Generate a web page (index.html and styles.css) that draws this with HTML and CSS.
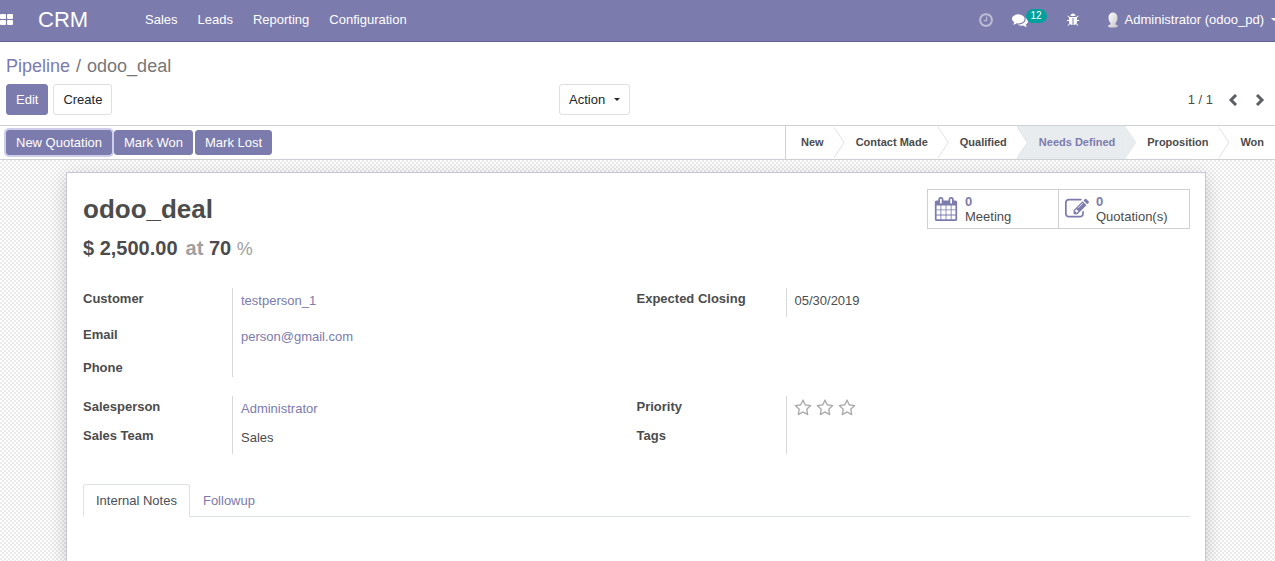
FILE: index.html
```html
<!DOCTYPE html>
<html lang="en">
<head>
<meta charset="utf-8">
<title>odoo_deal - CRM</title>
<link rel="stylesheet" href="styles.css">
</head>
<body>
<svg class="sprite" aria-hidden="true">
  <symbol id="star" viewBox="0 0 1792 1792"><path d="M1201 1004l306-297-422-62-189-382-189 382-422 62 306 297-73 421 378-199 377 199zm527-357q0 22-26 48l-363 354 86 500q1 7 1 20 0 50-41 50-19 0-40-12l-449-236-449 236q-22 12-40 12-21 0-31.5-14.5t-10.5-35.5q0-6 2-20l86-500-364-354q-25-27-25-48 0-37 56-46l502-73 225-455q19-41 49-41t49 41l225 455 502 73q56 9 56 46z"/></symbol>
</svg>
<header class="navbar">
  <button class="nav-icon apps" aria-label="Apps"><svg width="13" height="12" viewBox="0 0 13 12"><rect width="6" height="5" rx="1"/><rect x="7" width="6" height="5" rx="1"/><rect y="6" width="6" height="5" rx="1"/><rect x="7" y="6" width="6" height="5" rx="1"/></svg></button>
  <a class="brand" href="#">CRM</a>
  <nav class="menu">
    <a href="#">Sales</a>
    <a href="#">Leads</a>
    <a href="#">Reporting</a>
    <a href="#">Configuration</a>
  </nav>
  <div class="systray">
    <button class="nav-icon clock" aria-label="Activities"><svg width="16" height="16" viewBox="0 0 1792 1792"><path d="M1024 544v448q0 14-9 23t-23 9h-320q-14 0-23-9t-9-23v-64q0-14 9-23t23-9h224v-352q0-14 9-23t23-9h64q14 0 23 9t9 23zm416 352q0-148-73-273t-198-198-273-73-273 73-198 198-73 273 73 273 198 198 273 73 273-73 198-198 73-273zm224 0q0 209-103 385.5t-279.5 279.5-385.5 103-385.5-103-279.5-279.5-103-385.5 103-385.5 279.5-279.5 385.5-103 385.5 103 279.5 279.5 103 385.5z"/></svg></button>
    <button class="nav-icon messages" aria-label="Conversations"><svg width="16" height="16" viewBox="0 0 1792 1792"><path d="M1408 768q0 139-94 257t-256.500 186.500-353.500 68.500q-86 0-176-16-124 88-278 128-36 9-86 16h-3q-11 0-20.500-8t-11.500-21q-1-3-1-6.500t.5-6.500 2-6l2.500-5 3.500-5.500 4-5 4.500-5 4-4.500q5-6 23-25t26-29.500 22.500-29 25-38.500 20.500-44q-124-72-195-177t-71-224q0-139 94-257t256.500-186.500 353.500-68.500 353.500 68.500 256.500 186.500 94 257zm384 256q0 120-71 224.500t-195 176.500q10 24 20.500 44t25 38.500 22.500 29 26 29.500 23 25q1 1 4 4.500t4.500 5 4 5 3.500 5.500l2.500 5 2 6 .5 6.500-1 6.500q-3 14-13 22t-22 7q-50-7-86-16-154-40-278-128-90 16-176 16-271 0-472-132 58 4 88 4 161 0 309-45t264-129q125-92 192-212t67-254q0-77-23-152 129 71 204 178t75 230z"/></svg><span class="badge">12</span></button>
    <button class="nav-icon bug" aria-label="Developer tools"><svg width="14" height="14" viewBox="0 0 1792 1792"><path d="M1696 960q0 26-19 45t-45 19h-224q0 171-67 290l208 209q19 19 19 45t-19 45q-18 19-45 19t-45-19l-198-197q-5 5-15 13t-42 28.500-65 36.500-82 29-97 13v-896h-128v896q-51 0-101.500-13.500t-87-33-66-39-43.500-32.500l-15-14-183 207q-20 21-48 21-24 0-43-16-19-18-20.500-44.500t15.500-46.500l202-227q-58-114-58-274h-224q-26 0-45-19t-19-45 19-45 45-19h224v-294l-173-173q-19-19-19-45t19-45 45-19 45 19l173 173h844l173-173q19-19 45-19t45 19 19 45-19 45l-173 173v294h224q26 0 45 19t19 45zm-480-576h-640q0-133 93.500-226.500t226.500-93.500 226.500 93.500 93.500 226.500z"/></svg></button>
    <button class="nav-icon user"><svg width="12" height="16" viewBox="0 0 12 16"><defs><linearGradient id="face" x2="1" y2="1"><stop stop-color="#fff"/><stop offset="1" stop-color="#c4c4ca"/></linearGradient></defs><path fill="url(#face)" d="M6 0.500c2.700 0 4.500 2 4.500 5 0 2.600-1 4.600-2 5.700v1.300c1.500.3 2.200.9 2.500 1.500 0 1-2.200 1.600-5 1.600s-5-.6-5-1.600c.3-.6 1-1.200 2.500-1.500v-1.300C2.500 10.100 1.500 8.100 1.500 5.500c0-3 1.800-5 4.500-5z"/></svg><span>Administrator (odoo_pd)</span><i class="caret"></i></button>
  </div>
</header>

<section class="control-panel">
  <div class="breadcrumb"><a href="#">Pipeline</a><span>/</span><span>odoo_deal</span></div>
  <div class="toolbar">
    <div class="toolbar-left"><button class="btn primary">Edit</button><button class="btn">Create</button></div>
    <button class="btn action">Action<i class="caret"></i></button>
    <div class="pager"><span>1 / 1</span>
      <button aria-label="Previous"><svg width="10" height="12" viewBox="0 0 10 12"><path d="M8 1L3 6l5 5"/></svg></button>
      <button aria-label="Next"><svg width="10" height="12" viewBox="0 0 10 12"><path d="M2 1l5 5-5 5"/></svg></button>
    </div>
  </div>
</section>

<section class="statusbar">
  <div class="status-buttons"><button class="btn small primary focused">New Quotation</button><button class="btn small primary">Mark Won</button><button class="btn small primary">Mark Lost</button></div>
  <div class="stages">
    <button class="stage">New</button>
    <button class="stage">Contact Made</button>
    <button class="stage">Qualified</button>
    <button class="stage current">Needs Defined</button>
    <button class="stage">Proposition</button>
    <button class="stage">Won</button>
  </div>
</section>

<main class="content">
  <article class="sheet">
    <div class="sheet-head">
      <div>
        <h1>odoo_deal</h1>
        <h2><span>$ 2,500.00</span><span class="muted at">at</span> 70 <span class="muted percent">%</span></h2>
      </div>
      <div class="stats">
        <button class="stat"><svg width="24" height="24" viewBox="0 0 1792 1792"><path d="M192 1664h288v-288h-288v288zm352 0h320v-288h-320v288zm-352-352h288v-320h-288v320zm352 0h320v-320h-320v320zm-352-384h288v-288h-288v288zm736 736h320v-288h-320v288zm-384-736h320v-288h-320v288zm768 736h288v-288h-288v288zm-384-352h320v-320h-320v320zm-352-864v-288q0-13-9.500-22.500t-22.500-9.500h-64q-13 0-22.500 9.500t-9.500 22.500v288q0 13 9.500 22.500t22.500 9.500h64q13 0 22.500-9.500t9.500-22.500zm736 864h288v-320h-288v320zm-384-384h320v-288h-320v288zm384 0h288v-288h-288v288zm32-480v-288q0-13-9.500-22.500t-22.500-9.500h-64q-13 0-22.500 9.500t-9.500 22.500v288q0 13 9.500 22.500t22.500 9.500h64q13 0 22.500-9.500t9.500-22.500zm384-64v1280q0 52-38 90t-90 38h-1408q-52 0-90-38t-38-90v-1280q0-52 38-90t90-38h128v-96q0-66 47-113t113-47h64q66 0 113 47t47 113v96h384v-96q0-66 47-113t113-47h64q66 0 113 47t47 113v96h128q52 0 90 38t38 90z"/></svg><span><b>0</b>Meeting</span></button>
        <button class="stat"><svg width="24" height="24" viewBox="0 0 1792 1792"><path d="M888 1184l116-116-152-152-116 116v56h96v96h56zm440-720q-16-16-33 1l-350 350q-17 17-1 33t33-1l350-350q17-17 1-33zm80 594v190q0 119-84.500 203.500t-203.500 84.500h-832q-119 0-203.500-84.500t-84.500-203.500v-832q0-119 84.500-203.500t203.500-84.500h832q63 0 117 25 15 7 18 23 3 17-9 29l-49 49q-14 14-32 8-23-6-45-6h-832q-66 0-113 47t-47 113v832q0 66 47 113t113 47h832q66 0 113-47t47-113v-126q0-13 9-22l64-64q15-15 35-7t20 29zm-96-738l288 288-672 672h-288v-288zm444 132l-92 92-288-288 92-92q28-28 68-28t68 28l152 152q28 28 28 68t-28 68z"/></svg><span><b>0</b>Quotation(s)</span></button>
      </div>
    </div>

    <div class="groups">
      <dl class="group contact">
        <dt>Customer</dt><dd><a href="#">testperson_1</a></dd>
        <dt>Email</dt><dd><a href="#">person@gmail.com</a></dd>
        <dt>Phone</dt><dd></dd>
      </dl>
      <dl class="group">
        <dt>Expected Closing</dt><dd>05/30/2019</dd>
      </dl>
      <dl class="group">
        <dt>Salesperson</dt><dd><a href="#">Administrator</a></dd>
        <dt>Sales Team</dt><dd>Sales</dd>
      </dl>
      <dl class="group">
        <dt>Priority</dt>
        <dd class="stars">
          <button aria-label="Medium"><svg width="18" height="18"><use href="#star"/></svg></button>
          <button aria-label="High"><svg width="18" height="18"><use href="#star"/></svg></button>
          <button aria-label="Very high"><svg width="18" height="18"><use href="#star"/></svg></button>
        </dd>
        <dt>Tags</dt><dd></dd>
      </dl>
    </div>

    <div class="tabs" role="tablist">
      <button class="tab active" role="tab" aria-selected="true">Internal Notes</button>
      <button class="tab" role="tab" aria-selected="false">Followup</button>
    </div>
  </article>
</main>
</body>
</html>
```
FILE: styles.css
```css
* { box-sizing: border-box; }
body {
  margin: 0;
  height: 100vh;
  display: flex;
  flex-direction: column;
  overflow: hidden;
  background: #fff;
  color: #4c4c4c;
  font: 13px/20px "Liberation Sans", Arial, sans-serif;
}
button {
  margin: 0;
  padding: 0;
  border: 0;
  background: none;
  color: inherit;
  font: inherit;
}
a { color: #7c7bad; text-decoration: none; }
svg { display: block; flex: none; fill: currentColor; }
.sprite { position: absolute; width: 0; height: 0; }
.caret {
  border: 3px solid transparent;
  border-top-color: currentColor;
  border-bottom: 0;
}

.navbar {
  display: flex;
  align-items: center;
  flex: none;
  height: 42px;
  padding-bottom: 2px;
  background: #7c7bad;
  border-bottom: 1px solid #5f5e97;
  color: #fff;
}
.navbar a { color: #fff; }
.nav-icon { display: flex; align-items: center; }
.apps { width: 38px; }
.brand { width: 97px; font-size: 22px; }
.menu { display: flex; }
.menu a { padding: 0 10px; }
.systray { display: flex; align-items: center; margin-left: auto; }
.clock { margin-right: 18px; opacity: 0.5; }
.messages { position: relative; width: 34px; margin-right: 20px; }
.badge {
  position: absolute;
  left: 14px;
  top: -3px;
  padding: 0 5px;
  border-radius: 7px;
  background: #00a09d;
  font-size: 10px;
  line-height: 14px;
}
.bug { margin-right: 27px; }
.user { gap: 6px; }
.user .caret { margin: 0 -2px 0 1px; }

.control-panel { flex: none; padding: 10px 6px; }
.breadcrumb {
  display: flex;
  gap: 6px;
  height: 32px;
  font-size: 18px;
  line-height: 28px;
  color: #777;
}
.toolbar {
  display: grid;
  grid-template-columns: 553px auto 1fr;
  align-items: center;
}
.toolbar-left { display: flex; gap: 5px; }
.btn {
  height: 31px;
  padding: 0 9px;
  border: 1px solid #dfe0e4;
  border-radius: 3px;
  background: #fff;
  color: #212529;
}
.btn.primary { background: #7c7bad; border-color: #7c7bad; color: #fff; }
.btn.small { height: 25px; }
.btn.focused { box-shadow: 0 0 0 2px #cfceea; }
.action { display: flex; align-items: center; gap: 9px; }
.pager { display: flex; align-items: center; justify-content: flex-end; padding-right: 4px; }
.pager button { margin-left: 17px; }
.pager button:first-of-type { margin-left: 15px; }
.pager svg { fill: none; stroke: #5d5f66; stroke-width: 3; }

.statusbar {
  display: flex;
  align-items: center;
  justify-content: space-between;
  flex: none;
  height: 35px;
  padding-left: 6px;
  border: solid #ced0d4;
  border-width: 1px 0;
}
.status-buttons { display: flex; gap: 2px; }
.stages { display: flex; align-self: stretch; border-left: 1px solid #ced0d4; }
.stage {
  position: relative;
  padding: 0 10px 1px 22px;
  font-size: 11px;
  font-weight: bold;
}
.stage:first-child { padding-left: 15px; }
.stage:last-child { padding-right: 11px; }
.stage:not(:last-child)::before,
.stage:not(:last-child)::after {
  content: "";
  position: absolute;
  z-index: 1;
  top: 0;
  right: -11px;
  width: 11px;
  height: 100%;
  background: #dee2e6;
  clip-path: polygon(0 0, 100% 50%, 0 100%);
}
.stage:not(:last-child)::after { right: -10px; background: #fff; }
.stage.current { background: #e9ecef; color: #7c7bad; }
.stage.current:not(:last-child)::before,
.stage.current:not(:last-child)::after { right: -11px; background: #e9ecef; }

.content {
  flex: 1;
  min-height: 0;
  padding: 12px 69px 0 66px;
  background: repeating-conic-gradient(#ebebeb 0 25%, #fff 0 50%) 0 0 / 4px 4px;
}
.sheet {
  min-height: 100%;
  padding: 16px 15px 0 16px;
  background: #fff;
  border: 1px solid #c8c8d3;
  border-bottom: 0;
  box-shadow: 0 5px 18px rgba(0, 0, 0, 0.2);
}
.sheet-head { display: flex; justify-content: space-between; align-items: flex-start; }
h1 { margin: 5px 0 0; font-size: 26px; line-height: 31px; }
h2 { margin: 11px 0 0; font-size: 20px; line-height: 24px; white-space: pre; }
.muted { color: #a0a0a0; }
.at { margin-left: 8px; }
.percent { font-size: 18px; font-weight: normal; }
.stats { display: flex; border: 1px solid #ced0d4; }
.stat {
  display: flex;
  align-items: center;
  gap: 7px;
  width: 131px;
  height: 38px;
  padding-left: 6px;
  text-align: left;
  line-height: 15px;
}
.stat:first-child { width: 130px; }
.stat + .stat { border-left: 1px solid #ced0d4; }
.stat svg, .stat b { color: #7c7bad; }
.stat b { display: block; }

.groups { display: grid; grid-template-columns: 1fr 1fr; gap: 19px 0; margin-top: 27px; }
.group {
  display: grid;
  grid-template-columns: 149px 1fr;
  grid-auto-rows: 29px;
  align-self: start;
  margin: 0;
}
.contact { grid-template-rows: 36px 33px 20px; }
dt { padding-top: 1px; font-weight: bold; }
dd { margin: 0; padding: 3px 8px 0; border-left: 1px solid #d8d8dc; }
.stars { display: flex; gap: 4px; padding: 3px 7px 0; color: #a8a8a8; }
.stars button { height: 18px; }

.tabs { display: flex; margin-top: 30px; border-bottom: 1px solid #dee2e6; }
.tab {
  height: 33px;
  margin-bottom: -1px;
  padding: 0 12px;
  border: 1px solid transparent;
  color: #7c7bad;
}
.tab.active {
  border-color: #dee2e6;
  border-bottom-color: #fff;
  border-radius: 3px 3px 0 0;
  background: #fff;
  color: #495057;
}
```
